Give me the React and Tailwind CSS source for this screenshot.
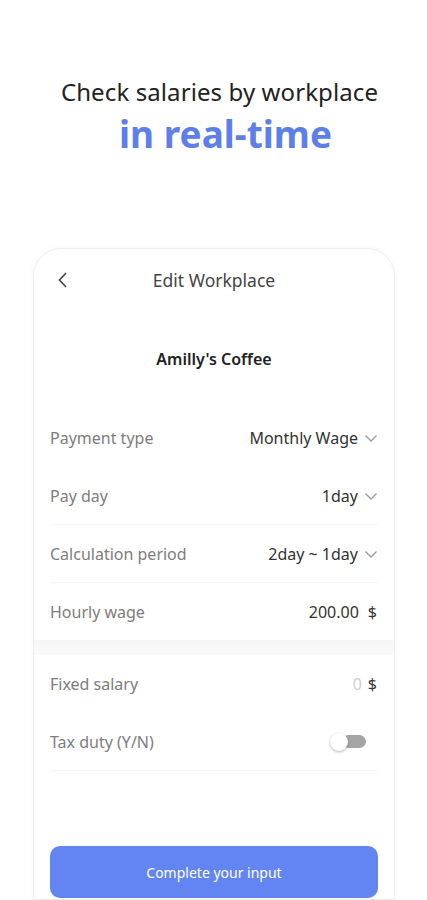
import React from 'react'

function Chevron() {
  return (
    <svg width="14" height="14" viewBox="0 0 14 14" className="ml-[6px]">
      <path d="M1.5 4.5 L7 10 L12.5 4.5" fill="none" stroke="#9a9a9a" strokeWidth="1.3" />
    </svg>
  )
}

function Row({ label, children, line }) {
  return (
    <div className={`flex items-center justify-between h-[58px] ${line ? 'border-b border-[#f6f6f6]' : ''}`}>
      <span className="text-[16px] text-[#7d7d7d]">{label}</span>
      <div className="flex items-center text-[16px] text-[#333]">{children}</div>
    </div>
  )
}

export default function App() {
  return (
    <div className="w-[427px] h-[900px] overflow-hidden bg-white flex flex-col items-center" style={{ fontFamily: '"Noto Sans", "Open Sans", sans-serif' }}>
      <div className="pt-[74px] flex flex-col items-center">
        <h2 className="text-[24px] leading-[36px] text-[#222] ml-[12px] tracking-[0.1px]">Check salaries by workplace</h2>
        <h1 className="text-[37px] leading-[48px] font-bold text-[#5d80e8] ml-[24px]">in real-time</h1>
      </div>

      <div className="mt-[90px] w-[362px] ml-[1px] flex-1 rounded-t-[28px] border border-[#ededed] shadow-[0_0_6px_rgba(0,0,0,0.04)]">
        <div className="relative flex items-center justify-center h-[56px] mt-[3px] mx-[16px]">
          <svg width="12" height="18" viewBox="0 0 12 18" className="absolute left-[7px]">
            <path d="M9 2 L2.5 9 L9 16" fill="none" stroke="#444" strokeWidth="1.6" />
          </svg>
          <span className="text-[17.5px] text-[#444]">Edit Workplace</span>
        </div>

        <div className="flex justify-center items-center h-[42px] mt-[30px] text-[16px] font-semibold text-[#222]">Amilly's Coffee</div>

        <div className="mt-[29px] px-[16px]">
          <Row label="Payment type">Monthly Wage<Chevron /></Row>
          <Row label="Pay day" line>1day<Chevron /></Row>
          <Row label="Calculation period" line>2day ~ 1day<Chevron /></Row>
          <Row label="Hourly wage">200.00<span className="ml-[9px] mr-[1px]">$</span></Row>
        </div>

        <div className="h-[15px] -mt-[1px] bg-gradient-to-b from-[#f6f6f6] to-[#fafafa]" />

        <div className="px-[16px]">
          <Row label="Fixed salary">
            <span className="text-[#cfcfcf]">0</span><span className="ml-[6px] mr-[1px]">$</span>
          </Row>
          <Row label="Tax duty (Y/N)" line>
            <div className="relative w-[36px] h-[18px] mr-[12px] flex items-center">
              <div className="absolute right-0 w-[24px] h-[13px] rounded-full bg-[#a5a5a5]" />
              <div className="absolute left-0 w-[18px] h-[18px] rounded-full bg-white shadow-[0_1px_3px_rgba(0,0,0,0.3)]" />
            </div>
          </Row>
        </div>

        <div className="px-[16px] mt-[75px]">
          <button className="w-full h-[52px] rounded-[10px] bg-[#6385f2] text-white text-[14px]">Complete your input</button>
        </div>
      </div>
    </div>
  )
}
